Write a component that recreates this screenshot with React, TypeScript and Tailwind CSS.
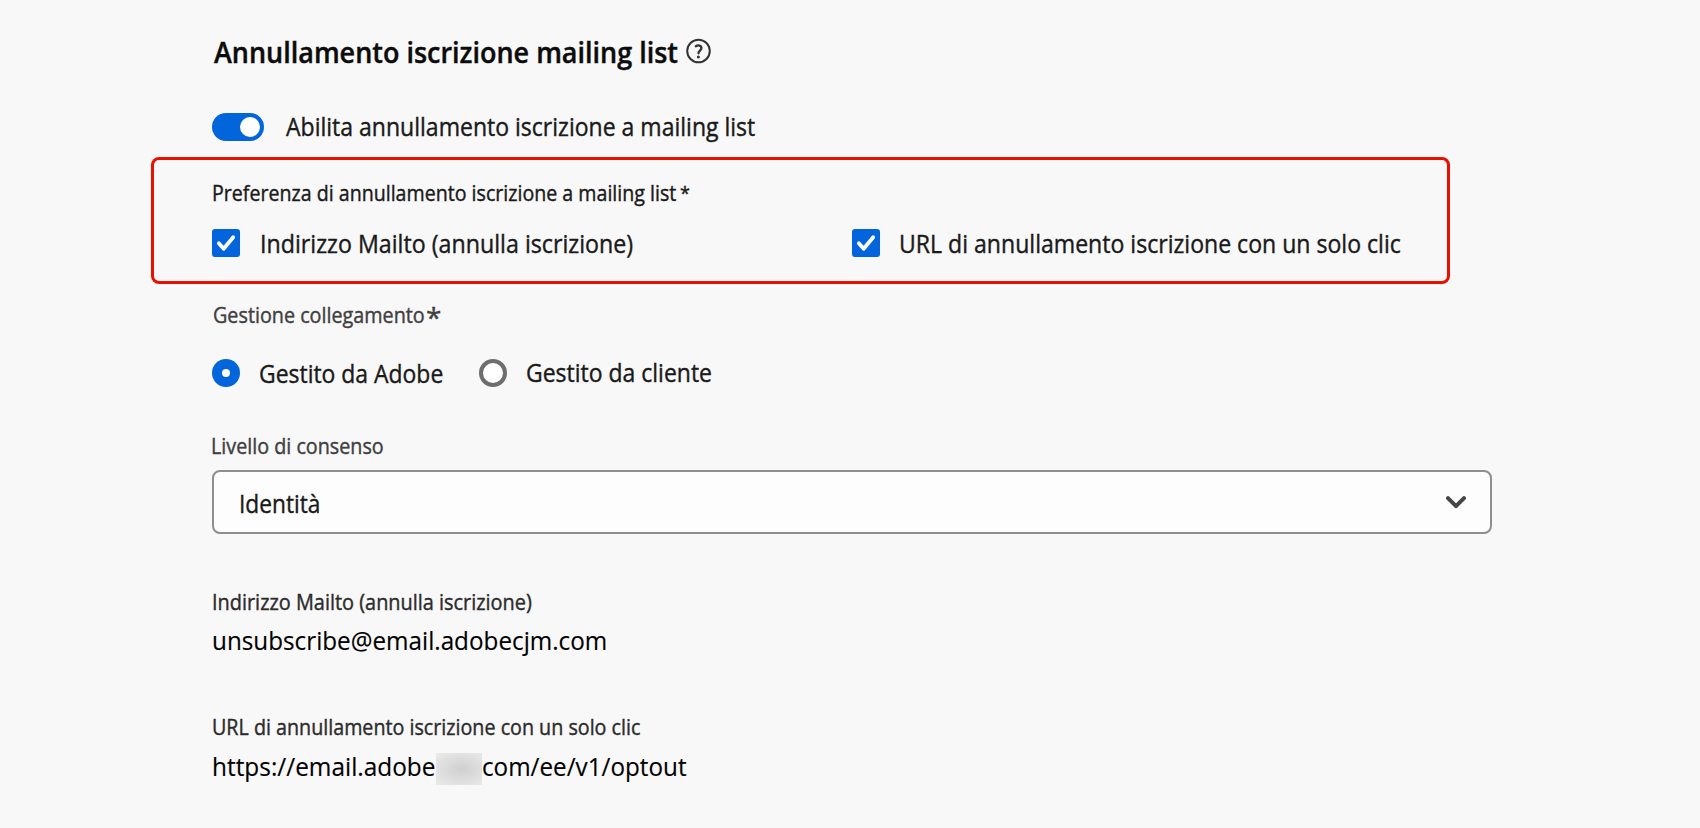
import type { ReactNode } from "react";

function Txt({ className, children }: { className: string; children: ReactNode }) {
  return <span className={`block origin-left whitespace-nowrap ${className}`}>{children}</span>;
}

function CheckBox() {
  return (
    <span className="flex size-7 shrink-0 items-center justify-center rounded-[3px] bg-[#0265dc]">
      <svg width="28" height="28" viewBox="0 0 28 28" fill="none" stroke="#fff" strokeWidth="3.8" strokeLinecap="round" strokeLinejoin="round">
        <path d="M6.800 14.300 11.700 19.800 21.200 8.200" />
      </svg>
    </span>
  );
}

export default function App() {
  return (
    <main className="flex h-[828px] w-[1700px] flex-col overflow-hidden bg-[#f8f8f8] pt-[38px] pl-[212px] font-['Open_Sans','Noto_Sans',sans-serif] text-[#1a1a1a] [-webkit-text-stroke:0.4px]">
      <div className="flex h-[26px] items-center">
        <div className="w-[472px] pl-[2px]">
          <Txt className="mt-[2px] scale-x-[0.963] text-[28px]/[26px] font-semibold text-[#0c0c0c]">Annullamento iscrizione mailing list</Txt>
        </div>
        <svg className="ml-[2px]" width="25" height="26" viewBox="0 0 25 26" fill="none" stroke="#333" strokeLinecap="round">
          <circle cx="12.5" cy="13" r="11.3" strokeWidth="2" />
          <path d="M9.800 8.200c2.200-1.400 5.600-.9 5.600 1.900 0 2.400-2.900 2.700-2.900 5.200" strokeWidth="2.300" />
          <circle cx="12.400" cy="18.900" r="1.500" fill="#333" stroke="none" />
        </svg>
      </div>

      <div className="mt-[49px] flex h-7 items-center">
        <div className="flex h-7 w-[52px] items-center justify-end rounded-full bg-[#0265dc] pr-1">
          <span className="size-5 rounded-full bg-white" />
        </div>
        <Txt className="-mt-px ml-[22px] scale-x-[0.921] text-[25px]/[27px]">Abilita annullamento iscrizione a mailing list</Txt>
      </div>

      <section className="-ml-[61px] mt-4 h-[127px] w-[1299px] rounded-lg border-[3px] border-[#ea1000] pt-[21px] pl-[58px]">
        <div className="flex h-6 items-center">
          <div className="w-[468px]">
            <Txt className="scale-x-[0.934] text-[21px]/6">Preferenza di annullamento iscrizione a mailing list</Txt>
          </div>
          <Txt className="text-[18px]/6">*</Txt>
        </div>
        <div className="mt-6 flex h-7 items-center">
          <div className="flex w-[640px] items-center">
            <CheckBox />
            <Txt className="ml-[20px] scale-x-[0.929] text-[25px]/7">Indirizzo Mailto (annulla iscrizione)</Txt>
          </div>
          <CheckBox />
          <Txt className="-mt-px ml-[19px] scale-x-[0.923] text-[25px]/[26px]">URL di annullamento iscrizione con un solo clic</Txt>
        </div>
      </section>

      <div className="mt-[19px] flex h-6 items-center pl-px text-[#404040]">
        <div className="w-[213px]">
          <Txt className="scale-x-[0.941] text-[21px]/6">Gestione collegamento</Txt>
        </div>
        <Txt className="mt-[3px] text-[28px]/6">*</Txt>
      </div>

      <div className="mt-8 flex h-7 items-center">
        <div className="flex w-[267px] items-center">
          <span className="flex size-7 items-center justify-center rounded-full bg-[#0265dc]">
            <span className="size-2 rounded-full bg-white" />
          </span>
          <Txt className="ml-[19px] scale-x-[0.917] text-[25px]/7">Gestito da Adobe</Txt>
        </div>
        <span className="size-7 rounded-full border-4 border-[#6e6e6e] bg-white" />
        <Txt className="-mt-[2px] ml-[19px] scale-x-[0.919] text-[25px]/[26px]">Gestito da cliente</Txt>
      </div>

      <Txt className="-ml-px mt-[47px] h-6 scale-x-[0.940] text-[21px]/6 text-[#404040]">Livello di consenso</Txt>

      <div className="mt-3 flex h-16 w-[1280px] items-center justify-between rounded-lg border-2 border-[#8e8e8e] bg-[#fdfdfd] pr-6 pl-[25px]">
        <Txt className="mt-[2px] scale-x-[0.908] text-[25px]/7">Identità</Txt>
        <svg width="20" height="13" viewBox="0 0 20 13" fill="none" stroke="#464646" strokeWidth="4" strokeLinecap="round" strokeLinejoin="round">
          <path d="M2 2.200 10 10.200 18 2.200" />
        </svg>
      </div>

      <Txt className="mt-[56px] h-6 scale-x-[0.948] text-[21px]/6 text-[#2c2c2c]">Indirizzo Mailto (annulla iscrizione)</Txt>
      <Txt className="mt-[10px] h-8 scale-x-[0.933] text-[26px]/8 text-black [-webkit-text-stroke:0.15px]">unsubscribe@email.adobecjm.com</Txt>

      <Txt className="mt-[59px] h-6 scale-x-[0.938] text-[21px]/6 text-[#2c2c2c]">URL di annullamento iscrizione con un solo clic</Txt>
      <div className="mt-[11px] flex h-8 items-center text-black [-webkit-text-stroke:0.15px]">
        <div className="w-[224px]">
          <Txt className="scale-x-[0.938] text-[26px]/8">https://email.adobe</Txt>
        </div>
        <span className="mt-[5px] h-8 w-[46px] bg-radial-[ellipse_at_55%_50%] from-[#cfcfcf] to-[#ebebeb]" />
        <Txt className="scale-x-[0.932] text-[26px]/8">com/ee/v1/optout</Txt>
      </div>
    </main>
  );
}
